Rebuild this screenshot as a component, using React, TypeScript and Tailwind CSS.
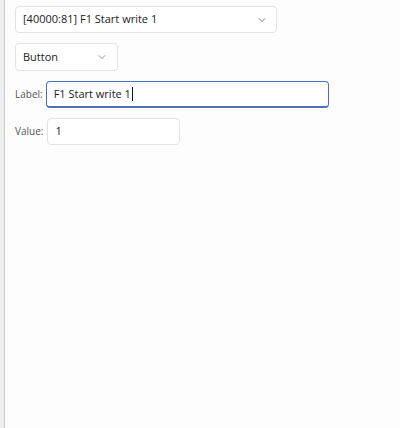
import React from 'react';
import { ChevronDown } from 'lucide-react';

const App: React.FC = () => {
  return (
    <div
      className="flex h-[428px] w-[400px] bg-[#f3f3f3] text-[11px] text-[#222]"
      style={{ fontFamily: '"Open Sans", "Noto Sans", sans-serif' }}
    >
      <div className="w-[4px] shrink-0 bg-[#efefef]" />
      <div className="flex-1 border-l border-[#c9c9c9] bg-[#fdfdfd] pl-[10px] pt-[6px]">
        <div className="flex h-[27px] w-[262px] items-center justify-between rounded-[4px] border border-[#e3e3e3] bg-white pl-[7px] pr-[8px]">
          <span>[40000:81] F1 Start write 1</span>
          <ChevronDown className="h-[12px] w-[12px] text-[#666]" strokeWidth={1.5} />
        </div>

        <div className="mt-[10px] flex h-[28px] w-[103px] items-center justify-between rounded-[4px] border border-[#e3e3e3] bg-white pl-[7px] pr-[9px]">
          <span>Button</span>
          <ChevronDown className="h-[12px] w-[12px] text-[#666]" strokeWidth={1.5} />
        </div>

        <div className="mt-[10px] flex items-center gap-[3px]">
          <span className="text-[10px] text-[#555]">Label:</span>
          <div className="flex h-[27px] w-[283px] items-center rounded-[4px] border border-[#4a72b8] border-b-2 bg-white pl-[7px]">
            <span>F1 Start write 1</span>
            <span className="ml-[1px] h-[14px] w-px bg-[#111]" />
          </div>
        </div>

        <div className="mt-[10px] flex items-center gap-[4px]">
          <span className="text-[10px] text-[#555]">Value:</span>
          <div className="flex h-[27px] w-[133px] items-center rounded-[4px] border border-[#e3e3e3] bg-white pl-[7px]">
            <span>1</span>
          </div>
        </div>
      </div>
    </div>
  );
};

export default App;
